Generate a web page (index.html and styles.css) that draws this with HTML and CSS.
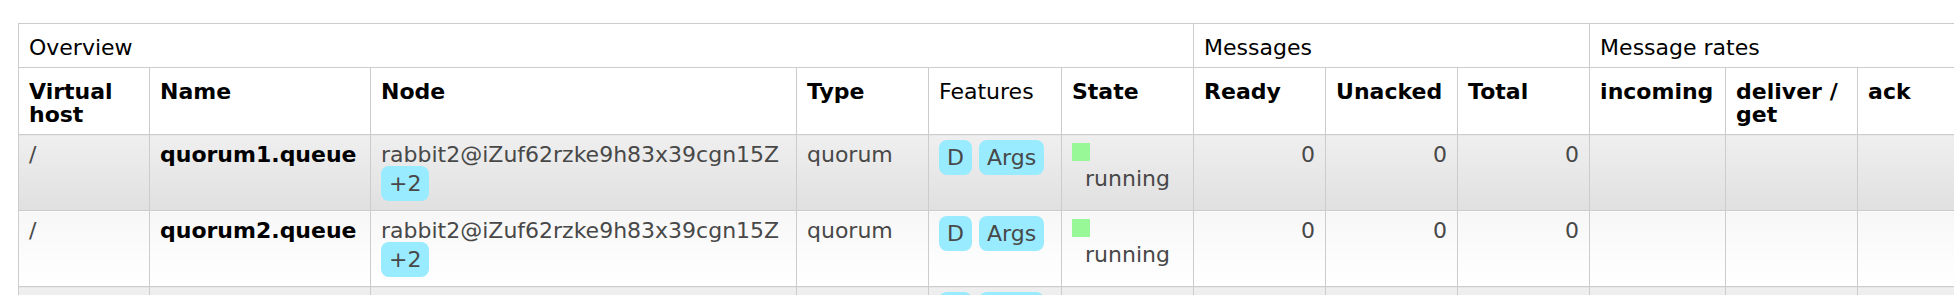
FILE: index.html
```
<!doctype html>
<html lang="en">
	<head>
		<meta charset="utf-8" />
		<title>Queues</title>
		<link rel="stylesheet" href="styles.css">
	</head>
	<body>
		<main class="queues">
			<table class="list">
				<colgroup>
					<col class="col-vhost" />
					<col class="col-name" />
					<col class="col-node" />
					<col class="col-std" />
					<col class="col-features" />
					<col class="col-std" />
					<col class="col-std" />
					<col class="col-std" />
					<col class="col-std" />
					<col class="col-incoming" />
					<col class="col-std" />
					<col class="col-std" />
				</colgroup>
				<thead>
					<tr>
						<th class="group" colspan="6">Overview</th>
						<th class="group" colspan="3">Messages</th>
						<th class="group" colspan="3">Message rates</th>
					</tr>
					<tr>
						<th>Virtual host</th>
						<th>Name</th>
						<th>Node</th>
						<th>Type</th>
						<th class="plain">Features</th>
						<th>State</th>
						<th>Ready</th>
						<th>Unacked</th>
						<th>Total</th>
						<th>incoming</th>
						<th>deliver / get</th>
						<th>ack</th>
					</tr>
				</thead>
				<tbody>
					<tr class="alt1">
						<td>/</td>
						<td class="queue-name">quorum1.queue</td>
						<td>rabbit2@iZuf62rzke9h83x39cgn15Z <span class="tag tag-block">+2</span></td>
						<td>quorum</td>
						<td class="features"><span class="tag">D</span> <span class="tag">Args</span></td>
						<td><span class="state-key"></span><span class="state-label">running</span></td>
						<td class="num">0</td>
						<td class="num">0</td>
						<td class="num">0</td>
						<td></td>
						<td></td>
						<td></td>
					</tr>
					<tr class="alt2">
						<td>/</td>
						<td class="queue-name">quorum2.queue</td>
						<td>rabbit2@iZuf62rzke9h83x39cgn15Z <span class="tag tag-block">+2</span></td>
						<td>quorum</td>
						<td class="features"><span class="tag">D</span> <span class="tag">Args</span></td>
						<td><span class="state-key"></span><span class="state-label">running</span></td>
						<td class="num">0</td>
						<td class="num">0</td>
						<td class="num">0</td>
						<td></td>
						<td></td>
						<td></td>
					</tr>
					<tr class="alt1">
						<td>/</td>
						<td class="queue-name">quorum3.queue</td>
						<td>rabbit2@iZuf62rzke9h83x39cgn15Z <span class="tag tag-block">+2</span></td>
						<td>quorum</td>
						<td class="features"><span class="tag">D</span> <span class="tag">Args</span></td>
						<td><span class="state-key"></span><span class="state-label">running</span></td>
						<td class="num">0</td>
						<td class="num">0</td>
						<td class="num">0</td>
						<td></td>
						<td></td>
						<td></td>
					</tr>
				</tbody>
			</table>
		</main>
	</body>
</html>
```

FILE: styles.css
```
/* Page */
html {
	overflow: hidden;
}

body {
	background-color: #fff;
	color: #484848;
	font-family: "DejaVu Sans", Verdana, sans-serif;
	font-size: 22px;
	line-height: 23px;
	margin: 0;
}

.queues {
	padding: 23px 0 0 18px;
}

/* Queue table */
.list {
	border-collapse: collapse;
	table-layout: fixed;
	width: 1971px;
}

.col-vhost { width: 131px; }
.col-name { width: 221px; }
.col-node { width: 426px; }
.col-features { width: 133px; }
.col-std { width: 132px; }
.col-incoming { width: 136px; }

.list th,
.list td {
	border: 1px solid #ccc;
	text-align: left;
	vertical-align: top;
}

.list th {
	background-color: #fff;
	color: #000;
	font-weight: bold;
	padding: 12px 10px 8px;
}

.list th.group,
.list th.plain {
	font-weight: normal;
}

.list td {
	padding: 8px 10px 9px;
}

.list tr.alt1 td {
	background-image: linear-gradient(#efefef, #e0e0e0);
}

.list tr.alt2 td {
	background-image: linear-gradient(#f7f7f7, #fff);
}

.list td.queue-name {
	color: #000;
	font-weight: bold;
}

.list td.num {
	text-align: right;
}

.list td.features {
	padding-top: 11px;
}

/* Tags and state */
.tag {
	background-color: #99ebff;
	border-radius: 8px;
	padding: 5px 8px;
}

.tag-block {
	display: inline-block;
	line-height: normal;
}

.state-key {
	background-color: #98f898;
	display: inline-block;
	height: 18px;
	vertical-align: top;
	width: 18px;
}

.state-label {
	display: block;
	padding: 1px 0 0 13px;
}
```
